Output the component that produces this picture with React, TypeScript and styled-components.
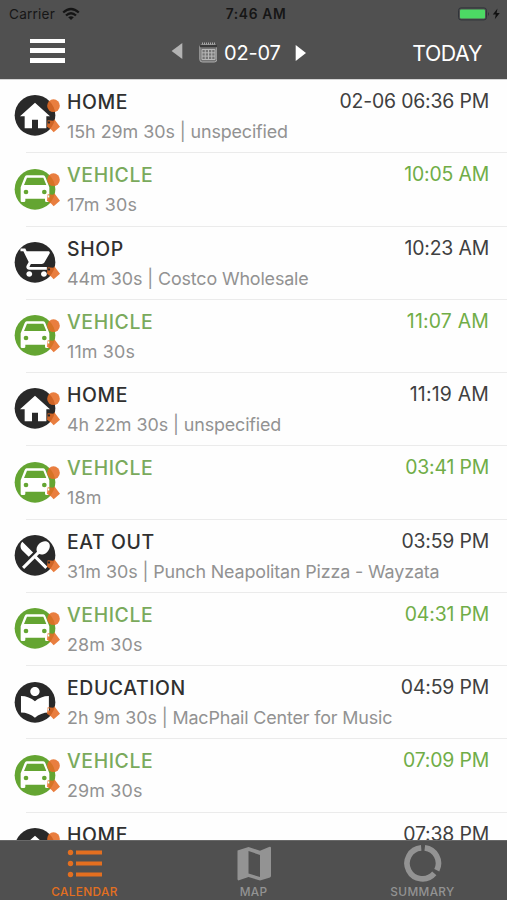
import React from "react";
import styled, { createGlobalStyle } from "styled-components";

const GlobalStyle = createGlobalStyle`
  * { box-sizing: border-box; }
  body { margin: 0; background: #fff; font-family: Inter, "Liberation Sans", sans-serif; }
`;

const Screen = styled.div`
  width: 507px;
  height: 900px;
  display: flex;
  flex-direction: column;
  overflow: hidden;
  background: #fefefe;
`;

const Header = styled.header`
  flex: none;
  height: 79px;
  background: #505050;
`;

const StatusBar = styled.div`
  height: 27px;
  padding: 1px 6px 0 9px;
  display: grid;
  grid-template-columns: 1fr auto 1fr;
  align-items: center;
  color: #161616;
  font-size: 13.6px;
  line-height: 26px;
`;

const Carrier = styled.div`
  display: flex;
  align-items: center;
  gap: 7px;
  letter-spacing: 0.2px;
`;

const Clock = styled.div`
  font-weight: 600;
  font-size: 13.8px;
  letter-spacing: 0.65px;
  padding-left: 2px;
`;

const Power = styled.div`
  display: flex;
  justify-content: flex-end;
`;

const NavBar = styled.div`
  height: 52px;
  display: grid;
  grid-template-columns: 176px 1fr 176px;
  align-items: center;
  color: #fff;
  line-height: 52px;
`;

const MenuButton = styled.div`
  width: 35px;
  height: 24px;
  margin: -5px 0 0 30px;
  display: flex;
  flex-direction: column;
  justify-content: space-between;
`;

const MenuBar = styled.span`
  height: 4.2px;
  background: #fff;
`;

const DatePicker = styled.div`
  display: flex;
  align-items: center;
  margin-left: -5px;
`;

const DateText = styled.span`
  font-size: 20px;
  letter-spacing: -0.2px;
  width: 58px;
  margin: 0 13px 0 7px;
  white-space: nowrap;
`;

const Today = styled.div`
  text-align: right;
  padding-right: 25px;
  font-size: 21.3px;
  letter-spacing: -0.35px;
`;

const List = styled.main`
  flex: 1;
  min-height: 0;
  overflow: hidden;
  border-top: 1px solid #d4d4d4;
`;

const Entry = styled.div`
  height: 73.27px;
  display: grid;
  grid-template-columns: 67px 1fr;
  background: linear-gradient(#ebebeb, #ebebeb) 26px 100% / 481px 1px no-repeat;
`;

const EntryIcon = styled.svg`
  width: 47px;
  height: 43px;
  margin: 14.4px 0 0 14px;
`;

const EntryBody = styled.div`
  padding: 9px 18px 0 0;
`;

const EntryHead = styled.div`
  display: flex;
  justify-content: space-between;
  line-height: 26px;
  white-space: nowrap;
`;

const Title = styled.div<{ $green: boolean }>`
  font-size: 19.4px;
  font-weight: 500;
  letter-spacing: 0.6px;
  color: ${(p) => (p.$green ? "#7aaa5c" : "#303030")};
`;

const Time = styled.div<{ $green: boolean; $narrow: boolean }>`
  font-size: 19.4px;
  letter-spacing: ${(p) => (p.$narrow ? "0.2px" : "-0.17px")};
  margin-top: -1px;
  color: ${(p) => (p.$green ? "#70ad47" : "#404040")};
`;

const Detail = styled.div`
  margin-top: 4px;
  font-size: 17.9px;
  line-height: 25px;
  color: #929292;
  white-space: nowrap;
`;

const Duration = styled.span<{ $alone: boolean }>`
  letter-spacing: ${(p) => (p.$alone ? "0.15px" : "-0.03px")};
`;

const Place = styled.span`
  letter-spacing: -0.14px;
`;

const TabBar = styled.nav`
  flex: none;
  height: 60px;
  background: #505050;
  border-top: 1px solid #686868;
  display: grid;
  grid-template-columns: repeat(3, 1fr);
`;

const Tab = styled.div<{ $active?: boolean }>`
  display: flex;
  flex-direction: column;
  align-items: center;
  color: ${(p) => (p.$active ? "#e36f20" : "#939393")};
  font-size: 11.8px;
  font-weight: 500;
  letter-spacing: 0.35px;
  line-height: 14px;
`;

const TabIcon = styled.svg`
  width: 40px;
  height: 40px;
  margin: 3px 0 1px;
`;

type Kind = "home" | "vehicle" | "shop" | "eat" | "education";

const glyphs: Record<Kind, React.ReactNode> = {
  home: <path d="M63 26 108 67H97V103H72V77H54V103H32V67H18Z" />,
  vehicle: (
    <>
      <path
        fillRule="evenodd"
        d="M38 22H88Q92 22 94 27L106 58V98Q106 102 102 102H97Q93 102 93 98V92H34V98Q34 102 30 102H24Q20 102 20 98V58L32 27Q34 22 38 22ZM39 29 30 51H97L88 29Z"
      />
      <circle cx="36" cy="72" r="7" fill="#64a532" />
      <circle cx="91" cy="72" r="7" fill="#64a532" />
    </>
  ),
  shop: (
    <path
      transform="translate(15 14) scale(4.4 4.25)"
      d="M7 18c-1.1 0-1.99.9-1.99 2S5.9 22 7 22s2-.9 2-2-.9-2-2-2zM1 2v2h2l3.6 7.59-1.35 2.45c-.16.28-.25.61-.25.96 0 1.1.9 2 2 2h12v-2H7.42c-.14 0-.25-.11-.25-.25l.03-.12.9-1.63h7.45c.75 0 1.41-.41 1.75-1.03l3.58-6.49c.08-.14.12-.31.12-.48 0-.55-.45-1-1-1H5.21l-.94-2H1zm16 16c-1.1 0-1.99.9-1.99 2s.89 2 1.99 2 2-.9 2-2-.9-2-2-2z"
    />
  ),
  eat: (
    <path
      transform="translate(7 7) scale(4.6)"
      d="M8.1 13.34l2.83-2.83L3.91 3.5c-1.56 1.56-1.56 4.09 0 5.66l4.19 4.18zm6.78-1.81c1.53.71 3.68.21 5.27-1.38 1.91-1.91 2.28-4.65.81-6.12-1.46-1.46-4.2-1.1-6.12.81-1.59 1.59-2.09 3.74-1.38 5.27L3.7 19.87l1.41 1.41L12 14.41l6.88 6.88 1.41-1.41L13.41 13l1.47-1.47z"
    />
  ),
  education: (
    <path
      transform="translate(7 9) scale(4.65 4.5)"
      d="M12 11.55C9.64 9.35 6.48 8 3 8v11c3.48 0 6.64 1.35 9 3.55 2.36-2.19 5.52-3.55 9-3.55V8c-3.48 0-6.64 1.35-9 3.55zM12 8c1.66 0 3-1.34 3-3s-1.34-3-3-3-3 1.34-3 3 1.34 3 3 3z"
    />
  ),
};

interface Item {
  kind: Kind;
  title: string;
  time: string;
  duration: string;
  place?: string;
}

const items: Item[] = [
  { kind: "home", title: "HOME", time: "02-06 06:36 PM", duration: "15h 29m 30s", place: "unspecified" },
  { kind: "vehicle", title: "VEHICLE", time: "10:05 AM", duration: "17m 30s" },
  { kind: "shop", title: "SHOP", time: "10:23 AM", duration: "44m 30s", place: "Costco Wholesale" },
  { kind: "vehicle", title: "VEHICLE", time: "11:07 AM", duration: "11m 30s" },
  { kind: "home", title: "HOME", time: "11:19 AM", duration: "4h 22m 30s", place: "unspecified" },
  { kind: "vehicle", title: "VEHICLE", time: "03:41 PM", duration: "18m" },
  { kind: "eat", title: "EAT OUT", time: "03:59 PM", duration: "31m 30s", place: "Punch Neapolitan Pizza - Wayzata" },
  { kind: "vehicle", title: "VEHICLE", time: "04:31 PM", duration: "28m 30s" },
  { kind: "education", title: "EDUCATION", time: "04:59 PM", duration: "2h 9m 30s", place: "MacPhail Center for Music" },
  { kind: "vehicle", title: "VEHICLE", time: "07:09 PM", duration: "29m 30s" },
  { kind: "home", title: "HOME", time: "07:38 PM", duration: "" },
];

function ActivityIcon({ kind }: { kind: Kind }) {
  const hasDot = kind === "home" || kind === "vehicle";
  return (
    <EntryIcon viewBox="0 0 141 129">
      <circle cx="63" cy="64" r="61" fill={kind === "vehicle" ? "#64a532" : "#292929"} />
      <g fill="#fff">{glyphs[kind]}</g>
      <g fill="#e66c24" fillOpacity="0.88">
        {hasDot && <circle cx="118.500" cy="35" r="19" />}
        <path
          fillRule="evenodd"
          d="M101 79 118 80 121 76 138 98 119 115 112 107 99 98ZM105 82A3.500 3.500 0 1 0 105 89A3.500 3.500 0 1 0 105 82Z"
        />
      </g>
    </EntryIcon>
  );
}

export default function App() {
  return (
    <Screen>
      <GlobalStyle />
      <Header>
        <StatusBar>
          <Carrier>
            Carrier
            <svg width="18" height="14" viewBox="0 0 18 14" fill="none" stroke="#151515" strokeWidth="2.3">
              <path d="M1.200 5.500Q9 -1.600 16.800 5.500" />
              <path d="M4 8.500Q9 4 14 8.500" />
              <path d="M6.200 10.300Q9 8 11.800 10.300L9 13Z" fill="#151515" stroke="none" />
            </svg>
          </Carrier>
          <Clock>7:46 AM</Clock>
          <Power>
            <svg width="44" height="14" viewBox="0 0 44 14">
              <rect x="1.500" y="0.900" width="28" height="12" rx="2.500" fill="none" stroke="#30343a" />
              <rect x="3" y="2.400" width="25" height="9" rx="1" fill="#4cd964" />
              <path d="M31 5Q33 7 31 9Z" fill="#30343a" />
              <path d="M40.500 1.500 35.800 7.500H38.800L37.800 12.300 42.800 5.900H39.600Z" fill="#111" />
            </svg>
          </Power>
        </StatusBar>
        <NavBar>
          <MenuButton>
            <MenuBar />
            <MenuBar />
            <MenuBar />
          </MenuButton>
          <DatePicker>
            <svg width="46" height="22" viewBox="0 0 46 22">
              <path d="M11.300 1V17L.6 9Z" fill="#b3b3b3" />
              <rect x="28.800" y="2.500" width="17" height="17.500" rx="2.500" fill="#747474" stroke="#aaa" />
              <path d="M29 4H46" stroke="#393939" strokeWidth="2.500" />
              <path d="M31 1.500H45" stroke="#aaa" strokeWidth="2" strokeDasharray="1 1" />
              <path d="M31 7.500H44V17.500H31ZM31 10.800H44M31 14.100H44M34.250 7.500V17.500M37.500 7.500V17.500M40.750 7.500V17.500" fill="none" stroke="#b7b7b7" />
            </svg>
            <DateText>02-07</DateText>
            <svg width="12" height="18" viewBox="0 0 12 18">
              <path d="M.7 .9V16.900L11 8.900Z" fill="#fff" />
            </svg>
          </DatePicker>
          <Today>TODAY</Today>
        </NavBar>
      </Header>
      <List>
        {items.map((it, i) => {
          const green = it.kind === "vehicle";
          return (
            <Entry key={i}>
              <ActivityIcon kind={it.kind} />
              <EntryBody>
                <EntryHead>
                  <Title $green={green}>{it.title}</Title>
                  <Time $green={green} $narrow={it.time.startsWith("11")}>{it.time}</Time>
                </EntryHead>
                <Detail>
                  <Duration $alone={!it.place}>{it.duration}</Duration>
                  {it.place && <Place>{` | ${it.place}`}</Place>}
                </Detail>
              </EntryBody>
            </Entry>
          );
        })}
      </List>
      <TabBar>
        <Tab $active>
          <TabIcon viewBox="0 0 40 40" fill="currentColor">
            <circle cx="5.500" cy="8.500" r="2.700" />
            <circle cx="5.500" cy="19.500" r="2.700" />
            <circle cx="5.500" cy="30.500" r="2.700" />
            <path d="M11 6.600H37V10.400H11ZM11 17.600H37V21.400H11ZM11 28.600H37V32.400H11Z" />
          </TabIcon>
          CALENDAR
        </Tab>
        <Tab>
          <TabIcon viewBox="0 0 40 40" fill="currentColor">
            <path
              fillRule="evenodd"
              d="M3.500 6.500 14.500 3 26 6.800 35 3Q37 2.300 37 4V32Q37 33 36 33.400L26 36.500 14.500 33 5 36.300Q3.500 36.800 3.500 35ZM14.500 7V29.500L26 33V11Z"
            />
          </TabIcon>
          MAP
        </Tab>
        <Tab>
          <TabIcon viewBox="0 0 40 40" fill="none" stroke="currentColor" strokeWidth="5.600">
            <path d="M21.800 3.900A15.500 15.500 0 0 1 33.800 26.200" />
            <path d="M31.300 29.400A15.500 15.500 0 1 1 18.200 3.900" />
          </TabIcon>
          SUMMARY
        </Tab>
      </TabBar>
    </Screen>
  );
}
